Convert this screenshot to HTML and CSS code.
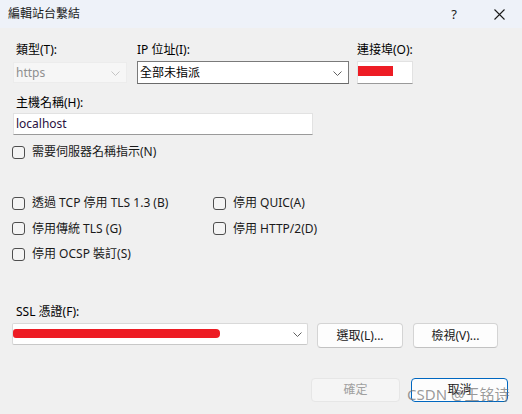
FILE: index.html
```html
<!DOCTYPE html>
<html lang="zh-Hant">
<head>
<meta charset="utf-8">
<title>編輯站台繫結</title>
<link rel="stylesheet" href="styles.css">
</head>
<body>
<div class="titlebar">
  <span class="title">編輯站台繫結</span>
  <span class="help">?</span>
  <span class="close"><svg width="11" height="11" viewBox="0 0 11 11"><path d="M0.5 0.5 L10.5 10.5 M10.5 0.5 L0.5 10.5" stroke="#1a1a1a" stroke-width="1.1" fill="none"/></svg></span>
</div>
<div class="content">
  <div class="row1">
    <div class="col col-type">
      <div class="label">類型(T):</div>
      <div class="combo combo-disabled"><span class="val">https</span><svg class="chev" width="9" height="5" viewBox="0 0 9 5"><path d="M0.5 0.5 L4.5 4.5 L8.5 0.5" stroke="#c4c4c4" fill="none"/></svg></div>
    </div>
    <div class="col col-ip">
      <div class="label">IP 位址(I):</div>
      <div class="combo combo-ip"><span class="val">全部未指派</span><svg class="chev" width="9" height="5" viewBox="0 0 9 5"><path d="M0.5 0.5 L4.5 4.5 L8.5 0.5" stroke="#606060" fill="none"/></svg></div>
    </div>
    <div class="col col-port">
      <div class="label label-port">連接埠(O):</div>
      <div class="textbox port-box"><span class="redact-port"></span></div>
    </div>
  </div>

  <div class="label label-host">主機名稱(H):</div>
  <div class="textbox host-box"><span class="val">localhost</span></div>

  <div class="check check-sni"><span class="box"></span><span>需要伺服器名稱指示(N)</span></div>

  <div class="check-grid">
    <div class="check"><span class="box"></span><span>透過 TCP 停用 TLS 1.3 (B)</span></div>
    <div class="check"><span class="box"></span><span>停用 QUIC(A)</span></div>
    <div class="check"><span class="box"></span><span>停用傳統 TLS (G)</span></div>
    <div class="check"><span class="box"></span><span>停用 HTTP/2(D)</span></div>
    <div class="check"><span class="box"></span><span>停用 OCSP 裝訂(S)</span></div>
  </div>

  <div class="label label-ssl">SSL 憑證(F):</div>
  <div class="ssl-row">
    <div class="combo combo-ssl"><span class="redact-ssl"></span><svg class="chev" width="9" height="5" viewBox="0 0 9 5"><path d="M0.5 0.5 L4.5 4.5 L8.5 0.5" stroke="#606060" fill="none"/></svg></div>
    <div class="btn btn-select">選取(L)...</div>
    <div class="btn btn-view">檢視(V)...</div>
  </div>

  <div class="footer">
    <div class="btn btn-ok">確定</div>
    <div class="btn btn-cancel">取消</div>
  </div>
</div>
<div class="watermark">CSDN @王铭诗</div>
</body>
</html>
```

FILE: styles.css
```css
html, body {
  margin: 0;
  padding: 0;
}
body {
  width: 522px;
  height: 414px;
  position: relative;
  overflow: hidden;
  background: #f0f0f0;
  font-family: "Noto Sans", "Noto Sans CJK TC", sans-serif;
  font-size: 12px;
  line-height: 16px;
  color: #000;
}
.titlebar {
  height: 28px;
  background: #eef2f9;
  display: flex;
  align-items: center;
  padding: 0 17px 0 8px;
}
.title {
  color: #1a1a1a;
}
.help {
  margin-left: auto;
  width: 10px;
  text-align: center;
  font-size: 13px;
  color: #1a1a1a;
}
.close {
  margin-left: 35px;
  width: 11px;
  height: 11px;
  display: flex;
}
.content {
  padding: 0 0 0 13px;
}
.row1 {
  display: flex;
  margin-top: 14px;
}
.col-type { width: 114px; }
.col-ip { width: 212px; margin-left: 10px; }
.col-port { width: 56px; margin-left: 8px; }
.label {
  height: 16px;
}
.col-type .label { padding-left: 3px; }
.combo, .textbox {
  box-sizing: border-box;
  background: #fff;
  display: flex;
  align-items: center;
  position: relative;
}
.combo {
  margin-top: 3px;
  height: 23px;
  padding-left: 2px;
}
.combo .chev {
  position: absolute;
  right: 6px;
  top: 9px;
}
.combo-disabled {
  background: #f6f6f6;
  border: 1px solid #ececec;
  color: #8f8f8f;
  height: 21px;
  margin-top: 4px;
}
.combo-disabled .chev { top: 8px; }
.combo-ip {
  border: 1px solid #7a7a7a;
  border-bottom-color: #6a6a6a;
}
.textbox {
  border: 1px solid #e2e2e2;
  border-bottom: 1px solid #9a9a9a;
  padding-left: 2px;
}
.port-box {
  margin-top: 3px;
  height: 23px;
  align-items: flex-start;
  padding-left: 0;
}
.redact-port {
  display: block;
  width: 35px;
  height: 10px;
  margin-top: 4px;
  background: #ed1c24;
}
.label-host {
  margin-top: 11px;
  padding-left: 3px;
}
.host-box {
  margin-top: 2px;
  width: 300px;
  height: 22px;
  color: #2a1040;
}
.check {
  display: flex;
  align-items: center;
  height: 16px;
  color: #1a1a1a;
}
.check .box {
  box-sizing: border-box;
  width: 13px;
  height: 13px;
  border: 1px solid #4e4e4e;
  border-radius: 3px;
  background: #f4f4f4;
  margin-right: 7px;
}
.check-sni {
  margin-top: 9px;
  margin-left: -1px;
}
.check-grid {
  margin-top: 35px;
  margin-left: -1px;
  display: grid;
  grid-template-columns: 201px auto;
  grid-auto-rows: 16px;
  row-gap: 9.5px;
}
.label-ssl {
  margin-top: 42px;
  padding-left: 3px;
}
.ssl-row {
  display: flex;
  align-items: flex-start;
  margin-top: 3px;
  margin-left: -1px;
}
.combo-ssl {
  margin-top: 0;
  width: 296px;
  height: 22px;
  border: 1px solid #d9d9d9;
  border-bottom-color: #c8c8c8;
  padding-left: 0;
  border-radius: 2px;
}
.combo-ssl .chev { top: 8px; right: 5px; }
.redact-ssl {
  display: block;
  width: 207px;
  height: 9px;
  margin-top: -2px;
  background: #ed1c24;
  border-radius: 3px 4px 4px 3px;
}
.btn {
  box-sizing: border-box;
  display: flex;
  align-items: center;
  justify-content: center;
  background: #fdfdfd;
  border: 1px solid #d4d4d4;
  border-bottom-color: #c2c2c2;
  border-radius: 4px;
  color: #1a1a1a;
}
.btn-select {
  width: 86px;
  height: 25px;
  margin-left: 9px;
}
.btn-view {
  width: 85px;
  height: 25px;
  margin-left: 10px;
}
.footer {
  display: flex;
  justify-content: flex-end;
  padding-right: 14px;
  margin-top: 30px;
}
.btn-ok {
  width: 89px;
  height: 24px;
  background: #f5f5f5;
  border-color: #e6e6e6;
  color: #a0a0a0;
}
.btn-cancel {
  width: 97px;
  height: 24px;
  margin-left: 11px;
  border: 1px solid #0067c0;
  background: #fdfdfd;
}
.watermark {
  position: absolute;
  left: 407px;
  top: 385px;
  font-family: "Noto Sans", "Noto Sans CJK SC", sans-serif;
  font-size: 15px;
  line-height: 18px;
  color: rgba(110, 110, 110, 0.7);
  white-space: nowrap;
}
```
